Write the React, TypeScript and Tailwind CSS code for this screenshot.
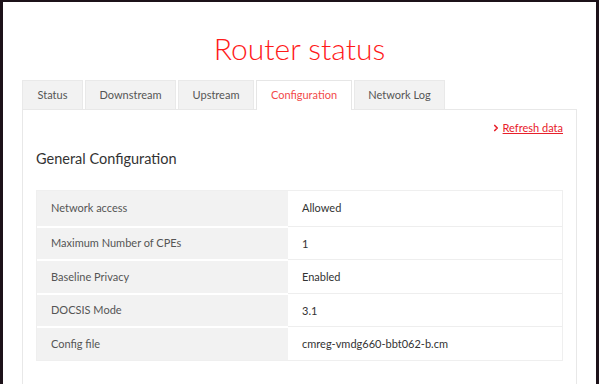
import { ChevronRight } from 'lucide-react';

const tabs = [
  { label: 'Status', width: 'w-[61px]' },
  { label: 'Downstream', width: 'w-[91px]' },
  { label: 'Upstream', width: 'w-[76px]' },
  { label: 'Configuration', width: 'w-[96px]' },
  { label: 'Network Log', width: 'w-[91px]' },
];

const rows: [string, string][] = [
  ['Network access', 'Allowed'],
  ['Maximum Number of CPEs', '1'],
  ['Baseline Privacy', 'Enabled'],
  ['DOCSIS Mode', '3.1'],
  ['Config file', 'cmreg-vmdg660-bbt062-b.cm'],
];

const App = () => {
  return (
    <div className="w-[599px] h-[384px] overflow-hidden bg-[#1c1219] pt-[2px] pl-[3px] pr-[3px] font-['Lato',sans-serif]">
      <div className="h-full bg-white pl-[19px] pr-[19px]">
        {/* Title */}
        <h1 className="h-[78px] pt-[26px] text-center text-[30px] font-light leading-[40px] text-[#ff1a1a]">
          Router status
        </h1>

        {/* Tabs */}
        <div className="flex gap-[2px] h-[29px]">
          {tabs.map(({ label, width }) => {
            const active = label === 'Configuration';
            return (
              <div
                key={label}
                className={`${width} flex items-center justify-center text-[11px] border border-b-0 ${
                  active
                    ? 'bg-white border-[#e6e6e6] text-[#f24a4a] relative z-10 h-[30px]'
                    : 'bg-[#f2f2f2] border-[#e9e9e9] text-[#555]'
                }`}
              >
                {label}
              </div>
            );
          })}
        </div>

        {/* Panel */}
        <div className="h-[300px] border border-[#e8e8e8] px-[13px]">
          <div className="flex justify-end pt-[10px]">
            <a className="flex items-center gap-[2px] text-[11px] text-[#e8202a] underline">
              <ChevronRight size={10} strokeWidth={4} className="text-[#e8202a]" />
              Refresh data
            </a>
          </div>

          <h2 className="mt-[12px] text-[14.5px] text-[#333] leading-[20px]">General Configuration</h2>

          <div className="mt-[21px] border border-[#efefef]">
            {rows.map(([label, value], i) => (
              <div
                key={label}
                className={`flex ${i > 0 ? 'h-[33.5px] border-t-2 border-white' : 'h-[35px]'}`}
              >
                <div className="w-[251px] bg-[#f2f2f2] flex items-center pl-[14px] text-[11px] text-[#555]">
                  {label}
                </div>
                <div
                  className={`flex-1 flex items-center pl-[14px] text-[11px] text-[#333] ${
                    i > 0 ? 'border-t border-[#eeeeee] -mt-[2px] pt-[2px]' : ''
                  }`}
                >
                  {value}
                </div>
              </div>
            ))}
          </div>
        </div>
      </div>
    </div>
  );
};

export default App;
